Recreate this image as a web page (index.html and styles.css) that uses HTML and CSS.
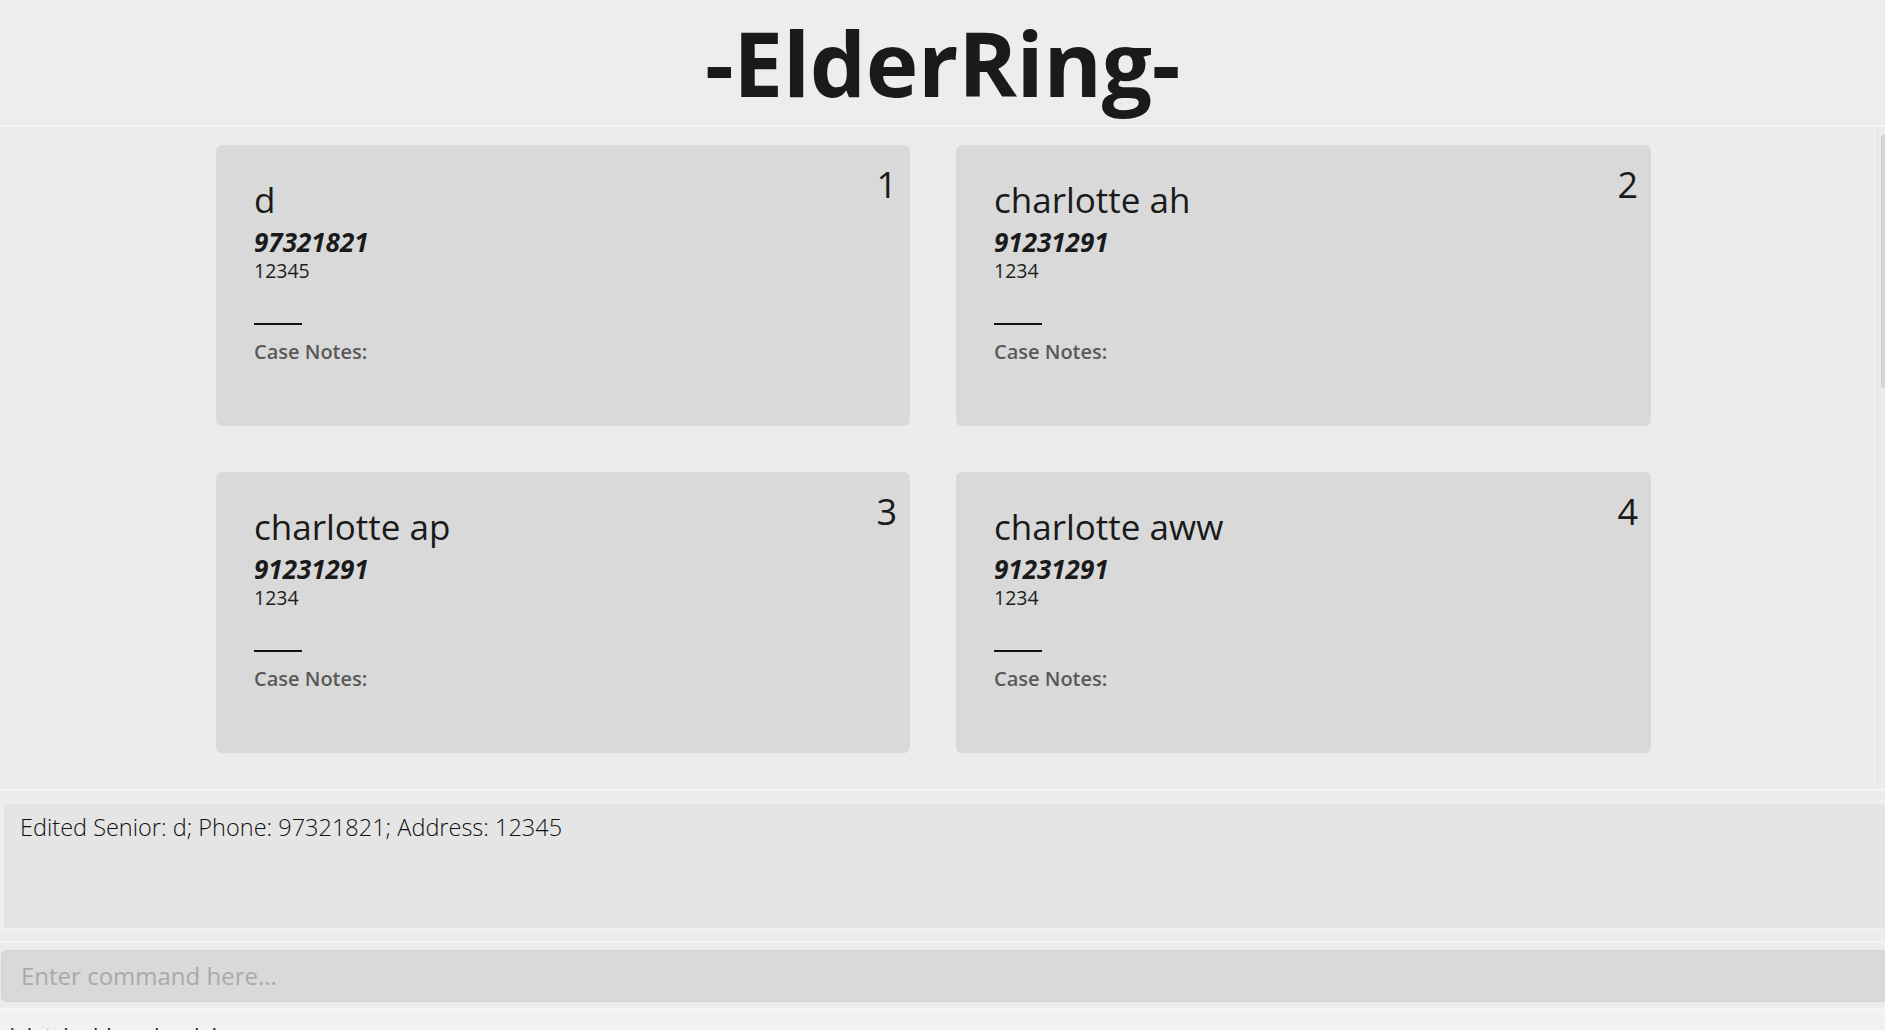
FILE: index.html
```html
<!DOCTYPE html>
<html lang="en">
<head>
<meta charset="utf-8">
<title>ElderRing</title>
<link rel="stylesheet" href="styles.css">
</head>
<body>
<div class="app">
  <header class="title-bar">
    <h1 class="title">-ElderRing-</h1>
  </header>

  <section class="list-panel">
    <div class="list-view">
      <div class="card">
        <div class="card-body">
          <div class="name">d</div>
          <div class="phone">97321821</div>
          <div class="address">12345</div>
          <div class="divider"></div>
          <div class="notes">Case Notes:</div>
        </div>
        <div class="index">1</div>
      </div>
      <div class="card">
        <div class="card-body">
          <div class="name">charlotte ah</div>
          <div class="phone">91231291</div>
          <div class="address">1234</div>
          <div class="divider"></div>
          <div class="notes">Case Notes:</div>
        </div>
        <div class="index">2</div>
      </div>
      <div class="card">
        <div class="card-body">
          <div class="name">charlotte ap</div>
          <div class="phone">91231291</div>
          <div class="address">1234</div>
          <div class="divider"></div>
          <div class="notes">Case Notes:</div>
        </div>
        <div class="index">3</div>
      </div>
      <div class="card">
        <div class="card-body">
          <div class="name">charlotte aww</div>
          <div class="phone">91231291</div>
          <div class="address">1234</div>
          <div class="divider"></div>
          <div class="notes">Case Notes:</div>
        </div>
        <div class="index">4</div>
      </div>
    </div>
    <div class="scrollbar"><div class="thumb"></div></div>
  </section>

  <section class="result-wrap">
    <div class="result-box">Edited Senior: d; Phone: 97321821; Address: 12345</div>
  </section>

  <section class="command-wrap">
    <input class="command" type="text" placeholder="Enter command here...">
  </section>

  <footer class="status-bar">.\data\addressbook.json</footer>
</div>
</body>
</html>
```

FILE: styles.css
```css
* { box-sizing: border-box; }

html, body {
  margin: 0;
  padding: 0;
  height: 1030px;
  overflow: hidden;
  background: #ececec;
  font-family: "Open Sans", "Noto Sans", sans-serif;
  color: #1a1a1a;
}

.app {
  display: flex;
  flex-direction: column;
  height: 1030px;
}

.title-bar {
  height: 127px;
  flex: none;
  background: #ededed;
  border-bottom: 2px solid #f6f6f6;
  padding-top: 4px;
}

.title {
  margin: 0;
  text-align: center;
  font-size: 89px;
  font-weight: 700;
  line-height: 117px;
  color: #1a1a1a;
  letter-spacing: -0.3px;
}

.list-panel {
  flex: none;
  height: 664px;
  display: flex;
  border-bottom: 2px solid #f5f5f5;
}

.list-view {
  flex: 1;
  border-right: 1px solid #e2e2e2;
  padding: 18px 0 0 216px;
  display: grid;
  grid-template-columns: 694px 695px;
  grid-auto-rows: 281px;
  column-gap: 46px;
  row-gap: 46px;
  align-content: start;
}

.scrollbar {
  width: 7px;
  flex: none;
  padding: 8px 0 0 3px;
}

.thumb {
  width: 4px;
  height: 253px;
  background: #d6d6d6;
  border-radius: 3px 0 0 3px;
  border-left: 1px solid #cfcfcf;
}

.card {
  background: #d9d9d9;
  border-radius: 6px;
  display: flex;
  justify-content: space-between;
  align-items: flex-start;
  padding: 20px 13px 0 38px;
}

.card-body {
  display: flex;
  flex-direction: column;
  align-items: flex-start;
  margin-top: 11px;
}

.name {
  font-size: 35px;
  line-height: 48px;
  font-weight: 400;
  color: #1a1a1a;
}

.phone {
  margin-top: 4px;
  font-size: 26px;
  line-height: 28px;
  font-weight: 700;
  font-style: italic;
  color: #1a1a1a;
}

.address {
  margin-top: 3px;
  font-size: 19.5px;
  line-height: 24px;
  font-weight: 400;
  color: #1e1e1e;
}

.divider {
  margin-top: 40px;
  width: 48px;
  height: 2px;
  background: #111;
}

.notes {
  margin-top: 14px;
  font-size: 20px;
  line-height: 26px;
  font-weight: 600;
  color: #595959;
}

.index {
  font-size: 36px;
  line-height: 40px;
  color: #1a1a1a;
}

.result-wrap {
  flex: none;
  padding: 9px 0 0 0;
}

.result-box {
  height: 132px;
  background: #e5e5e5;
  border: 4px solid #efefef;
  border-right: none;
  padding: 7px 0 0 16px;
  font-size: 23.5px;
  line-height: 33px;
  font-weight: 300;
  color: #111;
}

.command-wrap {
  flex: none;
  margin-top: 9px;
  border-top: 2px solid #f4f4f4;
  padding: 7px 0 0 1px;
  height: 69px;
  border-bottom: 2px solid #f4f4f4;
}

.command {
  display: block;
  width: 1890px;
  height: 52px;
  margin: 0;
  background: #d9d9d9;
  border: 1px solid #d2d2d2;
  border-radius: 5px;
  padding: 0 0 2px 19px;
  font-family: "Open Sans", "Noto Sans", sans-serif;
  font-size: 24px;
  color: #1a1a1a;
  outline: none;
}

.command::placeholder {
  color: #a9a9a9;
}

.status-bar {
  flex: 1;
  background: #f1f1f1;
  padding: 10px 0 0 5px;
  font-size: 22px;
  line-height: 30px;
  font-weight: 400;
  color: #222;
  white-space: nowrap;
}
```
